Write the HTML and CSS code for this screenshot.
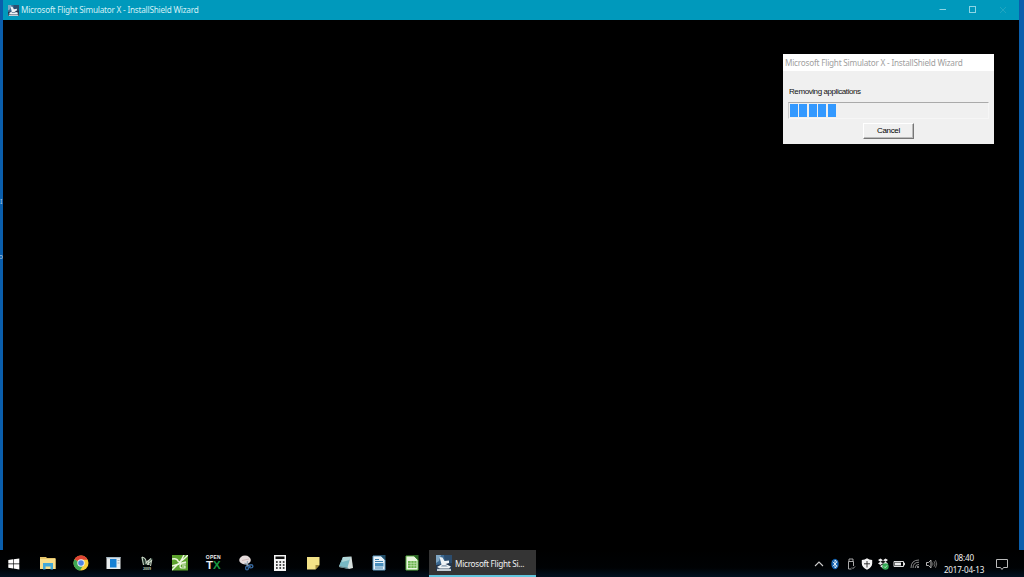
FILE: index.html
```
<!DOCTYPE html>
<html lang="en">
<head>
    <meta charset="UTF-8">
    <meta name="viewport" content="width=device-width, initial-scale=1.0">
    <title>Microsoft Flight Simulator X - InstallShield Wizard</title>
    <link rel="stylesheet" href="styles.css">
</head>
<body>
    <svg class="defs" width="0" height="0">
        <symbol id="plane" viewBox="0 0 16 16">
            <rect width="16" height="16" fill="#3d6a92"/>
            <path d="M8 0H16V9H9Z" fill="#2c4d6e"/>
            <path d="M0 0H5L3 6L0 8Z" fill="#7fa6c4"/>
            <path d="M0 10L16 8V16H0Z" fill="#23364e"/>
            <path d="M3.5 2L6.5 2.5L8.5 6L13 5.5V8L9.5 9L15 11.5L13 13.5H4L1 12L5.5 9.5Z" fill="#eef3f6"/>
            <path d="M1 13.8H15V16H1Z" fill="#c3cdd5"/>
            <path d="M6 10.3H10L12 11.6H5Z" fill="#7d93a8"/>
        </symbol>
    </svg>

    <div class="desktop">
        <span class="desktop-label label-top">I</span>
        <span class="desktop-label label-bottom">o</span>

        <div class="window">
            <div class="titlebar">
                <svg class="title-icon" width="11" height="11"><use href="#plane"/></svg>
                <span class="title-text">Microsoft Flight Simulator X - InstallShield Wizard</span>
                <div class="controls">
                    <svg width="30" height="20" viewBox="0 0 30 20"><path d="M11.5 9.5H18" stroke="#8dd5e4"/></svg>
                    <svg width="30" height="20" viewBox="0 0 30 20"><rect x="11.5" y="6.5" width="6" height="6" fill="none" stroke="#8dd5e4"/></svg>
                    <svg width="30" height="20" viewBox="0 0 30 20"><path d="M12 7L18 13M18 7L12 13" stroke="#28a8c3" stroke-width=".8"/></svg>
                </div>
            </div>
            <div class="window-body">
                <div class="dialog">
                    <div class="dialog-title"><span>Microsoft Flight Simulator X - InstallShield Wizard</span></div>
                    <div class="dialog-body">
                        <p class="status">Removing applications</p>
                        <div class="progress">
                            <i></i><i></i><i></i><i></i><i></i>
                        </div>
                        <button class="cancel">Cancel</button>
                    </div>
                </div>
            </div>
        </div>

        <div class="taskbar">
            <div class="start">
                <svg width="12" height="12" viewBox="0 0 12 12" fill="#fff"><path d="M.3 2L5 1.3V5.6H.3ZM5.6 1.2L11.3.4V5.6H5.6ZM.3 6.2H5V10.5L.3 9.8ZM5.6 6.2H11.3V11.4L5.6 10.6Z"/></svg>
            </div>
            <div class="pinned">
                <!-- file explorer -->
                <svg viewBox="0 0 16 16">
                    <path d="M0 2H6L7 3H15.5V14H0Z" fill="#e6c56a"/>
                    <path d="M0 4H15.5V14H0Z" fill="#f9df8b"/>
                    <path d="M3 8H13V14.5H10.5V11.5H5.5V14.5H3Z" fill="#43a9d8"/>
                </svg>
                <!-- chrome -->
                <svg viewBox="0 0 16 16">
                    <circle cx="8" cy="8" r="7.5" fill="#f6ce38"/>
                    <path d="M8 8L1.5 4.2A7.5 7.5 0 0 0 7 15.5L11 9Z" fill="#3fa653"/>
                    <path d="M8 8L1.5 4.2A7.5 7.5 0 0 1 14.7 4.8H8Z" fill="#df4435"/>
                    <circle cx="8" cy="8" r="3.7" fill="#f1f1ed"/>
                    <circle cx="8" cy="8" r="2.8" fill="#4d83e4"/>
                </svg>
                <svg viewBox="0 0 16 16">
                    <rect x=".5" y="2" width="14" height="12" fill="#e8edef"/>
                    <rect x=".5" y="2" width="14" height="1.3" fill="#a6b9c5"/>
                    <rect x="4" y="4" width="6.5" height="8.5" fill="#1681d5"/>
                    <path d="M11.5 5.5H13.5M11.5 8H13.5" stroke="#a6b0b6"/>
                </svg>
                <svg viewBox="0 0 16 16">
                    <path d="M2 2L5 3L8 8L12 3L14 4L11 10H5L3 7Z" fill="#263a30"/>
                    <path d="M3 2L4.5 10M3 2Q8 3 7 9M7 8L12 3.5M8 9.5L13 5M9 5L10 10M12.5 6L11.5 11" fill="none" stroke="#c9d6c5" stroke-width="1.1"/>
                    <text x="4" y="14.5" class="tiny-2009">2009</text>
                </svg>
                <svg viewBox="0 0 16 16">
                    <rect width="16" height="15.5" fill="#5ca22d"/>
                    <path d="M0 4Q5 3 6 6T14 2L16 0M0 11L7 9L10 4L12 0M0 15L6 9L14 7" fill="none" stroke="#edf7df" stroke-width="1.5"/>
                    <path d="M14 9H10Q8 9 8 11Q8 13 10 13H13V11H10" fill="none" stroke="#edf7df" stroke-width="1.2"/>
                </svg>
                <div class="opentx">
                    <span class="open-text">OPEN</span>
                    <span class="tx-text">T<b>X</b></span>
                </div>
                <!-- snipping tool -->
                <svg viewBox="0 0 16 16">
                    <ellipse cx="6" cy="5" rx="5.8" ry="4.4" fill="#e6dcdc"/>
                    <path d="M3 5.5L10 4" stroke="#c9aeae" stroke-width=".8"/>
                    <path d="M5.5 8L11.5 11.5M8.5 6L8 12" stroke="#9cabb9" stroke-width="1.3"/>
                    <ellipse cx="12" cy="11.3" rx="1.9" ry="1.6" fill="none" stroke="#35679d" stroke-width="1.4"/>
                    <ellipse cx="8" cy="13" rx="1.4" ry="1.9" fill="none" stroke="#35679d" stroke-width="1.4"/>
                </svg>
                <!-- calculator -->
                <svg viewBox="0 0 16 16">
                    <path d="M2 0H14V16H2Z" fill="#f5f5f5"/>
                    <path d="M3.5 1.5H12.5V4H3.5Z" fill="#111"/>
                    <path d="M4 7H12.5M4 10H12.5M4 13H12.5" stroke="#111" stroke-width="1.5" stroke-dasharray="1.7 1.7"/>
                </svg>
                <!-- sticky notes -->
                <svg viewBox="0 0 16 16">
                    <path d="M2 2H14.5V10L10.5 14.5H2Z" fill="#f3e288"/>
                    <path d="M14.5 10H10.5V14.5Z" fill="#a18b3d"/>
                </svg>
                <svg viewBox="0 0 16 16">
                    <path d="M5 2L13.5 1.5L15 13L11 14L1 12Z" fill="#d6dfdd"/>
                    <path d="M5 2L12.5 2L9.5 12.5L1 11Z" fill="#78b8c3"/>
                    <path d="M5 2L12.5 2L11.5 5L4 7Z" fill="#b1d7d9"/>
                    <path d="M1 11L9.5 12.5L11 14L2 12.3Z" fill="#557e86"/>
                </svg>
                <!-- writer -->
                <svg viewBox="0 0 16 16">
                    <path d="M2 1H10L14 5V15H2Z" fill="#e9f2f8" stroke="#5f9cc4"/>
                    <path d="M9 0H14.5V5.5Z" fill="#234e68"/>
                    <path d="M4 4.5H8M4 6.5H12M4 13H12" stroke="#397fad"/>
                    <rect x="4" y="8" width="8.5" height="3.5" fill="#4a8fbd"/>
                </svg>
                <!-- calc -->
                <svg viewBox="0 0 16 16">
                    <path d="M2 1H10L14 5V15H2Z" fill="#e9f5df" stroke="#5aae42"/>
                    <path d="M9 0H14.5V5.5Z" fill="#2c6625"/>
                    <rect x="4" y="6" width="8.5" height="7" fill="#69b34c"/>
                    <path d="M4 8.3H12.5M4 10.7H12.5M7 6V13M10 6V13" stroke="#d5ecc7" stroke-width=".6"/>
                </svg>
            </div>
            <div class="task-active">
                <svg width="16" height="16"><use href="#plane"/></svg>
                <span>Microsoft Flight Si...</span>
            </div>
            <div class="tray">
                <svg viewBox="0 0 16 16"><path d="M4 10L8 6L12 10" fill="none" stroke="#ccc" stroke-width="1.1"/></svg>
                <svg viewBox="0 0 16 16"><ellipse cx="8" cy="8" rx="3.7" ry="5.2" fill="#1160ae"/><path d="M5.7 5.8L10.2 10.1L8 12V4L10.2 5.9L5.7 10.2" fill="none" stroke="#e5f2fc" stroke-width=".9"/></svg>
                <svg viewBox="0 0 16 16"><path d="M6 5.5V3H10V5.5M5.5 5.5H10.5V10M5.5 5.5V13H8.5M9 11.5L10 12.5L12 10.5" fill="none" stroke="#bbb" stroke-width=".9"/></svg>
                <svg viewBox="0 0 16 16"><path d="M8 2.3Q10 4 13.2 4V7.5Q13 11.5 8 13.8Q3 11.5 2.8 7.5V4Q6 4 8 2.3Z" fill="#f4f4f4"/><path d="M8 5V11.5M5 7.8H11" stroke="#222" stroke-width=".9"/></svg>
                <svg viewBox="0 0 16 16"><path d="M3 4L5.5 2.5L8 4.2L10.5 2.5L13 4L10.7 5.8L13 7.5L10.5 9L8 7.3L5.5 9L3 7.5L5.3 5.8ZM5 10L8 8.5L11 10L8 12.5Z" fill="#eee"/><path d="M5.3 5.8L8 4.2L10.7 5.8L8 7.3Z" fill="#111"/><circle cx="10.5" cy="10.5" r="3.2" fill="#34a853"/><path d="M9 10.5L10.2 11.7L12.1 9.4" fill="none" stroke="#d9f5df" stroke-width=".8"/></svg>
                <svg viewBox="0 0 16 16"><path d="M3 5.5H12.5V10.5H3ZM12.5 7H13.5V9H12.5" fill="none" stroke="#ddd"/><path d="M4 6.5H10V9.5H4Z" fill="#eee"/></svg>
                <svg viewBox="0 0 16 16" fill="none" stroke="#999" stroke-width=".9"><path d="M4 12Q4 4 12 4M6 12Q6 6.2 12 6.2M8.2 12Q8.2 8.4 12 8.4"/><circle cx="11" cy="11" r=".7" fill="#ccc"/></svg>
                <svg viewBox="0 0 16 16" fill="none" stroke-width=".9"><path d="M3.5 6.5H5.5L8 4.2V11.8L5.5 9.5H3.5Z" stroke="#ccc"/><path d="M9.5 6.5Q10.5 8 9.5 9.5M11 5.2Q13 8 11 10.8M12.5 4.2Q15 8 12.5 11.8" stroke="#777"/></svg>
                <div class="clock">
                    <span class="time">08:40</span>
                    <span class="date">2017-04-13</span>
                </div>
                <svg class="notify" viewBox="0 0 14 14"><path d="M1.5 2.5H12.5V10.5H8.5L7 12.5L5.5 10.5H1.5Z" fill="none" stroke="#bbb"/></svg>
            </div>
        </div>
    </div>
</body>
</html>
```

FILE: styles.css
```
:root {
    --teal: #0099bc;
    --desktop: #0a5eac;
    --face: #f0f0f0;
    --progress: #3399ff;
}

* {
    margin: 0;
    padding: 0;
    box-sizing: border-box;
}

body {
    width: 1024px;
    height: 577px;
    overflow: hidden;
    background-color: #000;
    font-family: 'Noto Sans', 'Open Sans', sans-serif;
}

svg {
    display: block;
    flex: none;
}

.defs {
    position: absolute;
}

.desktop {
    position: relative;
    height: 577px;
    display: flex;
    flex-direction: column;
    background: var(--desktop);
}

.desktop-label {
    position: absolute;
    left: 0;
    width: 3px;
    overflow: hidden;
    font-size: 7px;
    line-height: 8px;
    color: #a9cdeb;
}

.label-top {
    top: 198px;
}

.label-bottom {
    top: 253px;
    direction: rtl;
}

/* Main window */
.window {
    height: 550px;
    margin: 0 5px 0 3px;
    display: flex;
    flex-direction: column;
    background: #000;
}

.titlebar {
    height: 20px;
    display: flex;
    align-items: center;
    padding-left: 5px;
    background: var(--teal);
}

.title-text {
    margin-left: 2px;
    font-size: 8.2px;
    letter-spacing: -0.22px;
    line-height: 20px;
    color: #d4f0f6;
    white-space: nowrap;
}

.controls {
    display: flex;
    margin-left: auto;
    margin-right: 1px;
}

.window-body {
    flex: 1;
    display: flex;
    justify-content: flex-end;
    align-items: flex-start;
    padding: 34px 25px 0 0;
}

/* Progress dialog */
.dialog {
    width: 211px;
    height: 90px;
    background: var(--face);
}

.dialog-title {
    height: 17px;
    padding-left: 2px;
    background: #fff;
    color: #a0a0a0;
    font-size: 8.2px;
    letter-spacing: -0.22px;
    line-height: 17px;
    white-space: nowrap;
}

.dialog-body {
    display: flex;
    flex-direction: column;
    padding: 16px 5px 0;
}

.status {
    padding-left: 1px;
    font-family: 'Liberation Sans', Arial, sans-serif;
    font-size: 8px;
    letter-spacing: -0.42px;
    line-height: 10px;
    color: #111;
}

.progress {
    height: 17px;
    margin-top: 5px;
    padding: 1px 1px 1px 0.7px;
    display: flex;
    gap: 1.3px;
    border: 1px solid #f6f6f6;
    border-top-color: #aaa;
    border-left-color: #ccc;
}

.progress i {
    width: 8.2px;
    background: var(--progress);
}

.cancel {
    width: 51px;
    height: 16px;
    margin: 4px 0 0 75px;
    border: 1px solid #fff;
    border-right: 1px solid #777;
    border-bottom: 1px solid #777;
    box-shadow: inset -1px -1px 0 #bbb;
    background: var(--face);
    font-family: 'Liberation Sans', Arial, sans-serif;
    font-size: 8px;
    letter-spacing: -0.35px;
    line-height: 12px;
    padding-bottom: 1px;
    color: #000;
}

/* Taskbar */
.taskbar {
    height: 27px;
    display: flex;
    align-items: stretch;
    background: linear-gradient(#000 0, #000204 18px, #021120 27px);
    color: #f0f0f0;
}

.start {
    width: 31px;
    display: flex;
    align-items: center;
    padding-left: 8px;
}

.pinned {
    width: 398px;
    display: flex;
    align-items: center;
    padding-bottom: 1px;
}

.pinned > * {
    width: 16px;
    height: 16px;
    margin: 0 8.58px;
}

.tiny-2009 {
    font-size: 3.5px;
    font-weight: bold;
    fill: #bdc9be;
}

.opentx {
    display: flex;
    flex-direction: column;
    align-items: center;
    font-family: 'Liberation Sans', Arial, sans-serif;
    font-weight: bold;
    color: #eee;
}

.open-text {
    font-size: 5px;
    line-height: 5px;
    letter-spacing: 0.2px;
}

.tx-text {
    font-size: 11.5px;
    line-height: 11px;
}

.tx-text b {
    color: #189a42;
}

.task-active {
    width: 107px;
    display: flex;
    align-items: center;
    gap: 3px;
    padding-left: 7px;
    background: #343434;
    border-bottom: 2px solid #61c5dd;
    font-size: 8.2px;
    letter-spacing: -0.28px;
    white-space: nowrap;
}

.task-active span {
    padding-top: 1px;
}

.tray {
    flex: 1;
    display: flex;
    align-items: center;
    justify-content: flex-end;
    padding-right: 15px;
}

.tray svg {
    width: 16px;
    height: 16px;
}

.clock {
    width: 50px;
    display: flex;
    flex-direction: column;
    align-items: center;
    font-size: 8.1px;
    letter-spacing: -0.2px;
    line-height: 12px;
}

.tray .notify {
    width: 14px;
    height: 14px;
    margin-left: 6px;
}
```
